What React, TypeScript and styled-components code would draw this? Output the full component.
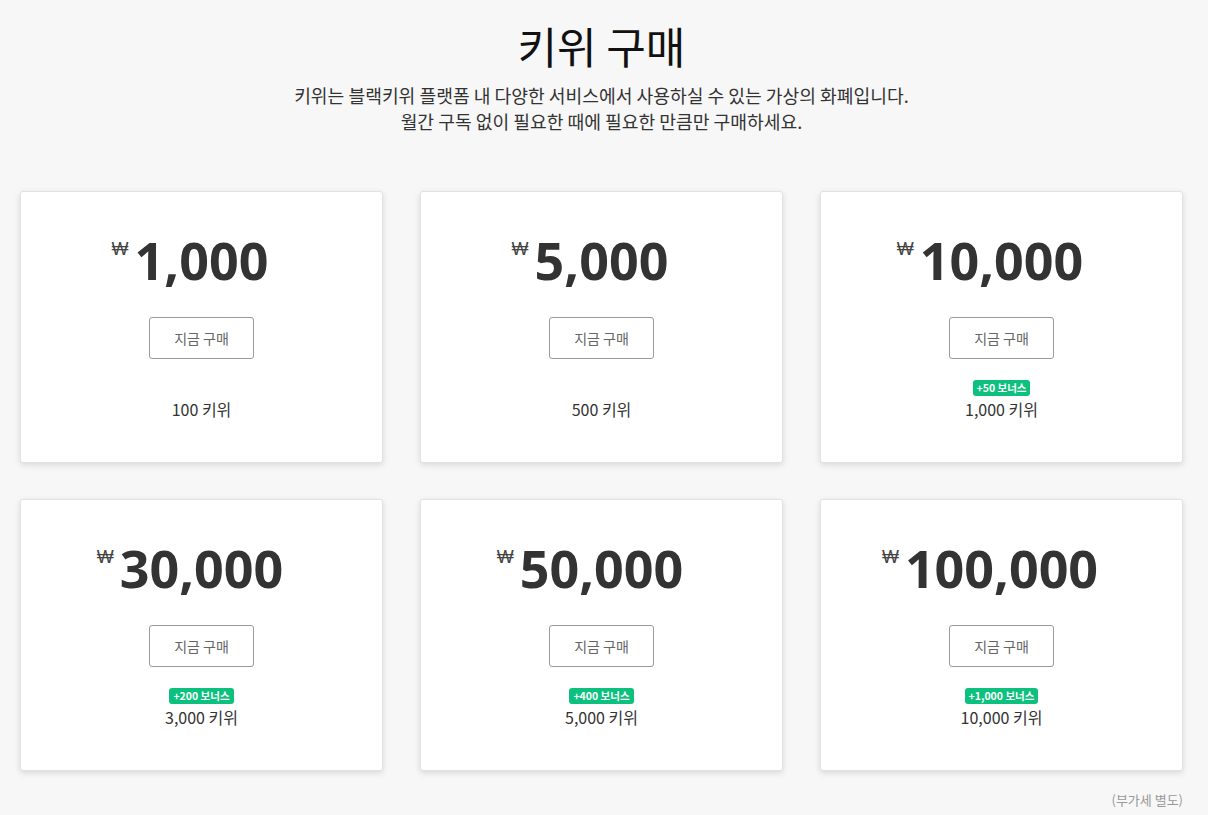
import styled, { createGlobalStyle } from 'styled-components'

const GlobalStyle = createGlobalStyle`
  html, body {
    margin: 0;
    padding: 0;
    background: #f7f7f7;
    font-family: 'Noto Sans', 'Noto Sans CJK KR', sans-serif;
    color: #333;
  }
`

const Page = styled.div`
  padding: 14px 25px 0 20px;
`

const Head = styled.header`
  text-align: center;
`

const Title = styled.h1`
  margin: 0;
  font-family: 'Noto Sans CJK KR', sans-serif;
  font-size: 43px;
  font-weight: 400;
  line-height: 62px;
  color: #111;
`

const Lead = styled.p`
  margin: 6px 0 0;
  font-family: 'Noto Sans CJK KR', sans-serif;
  font-size: 18.2px;
  line-height: 26px;
  color: #333;
`

const Grid = styled.section`
  display: grid;
  grid-template-columns: repeat(3, 1fr);
  column-gap: 37px;
  row-gap: 36px;
  margin-top: 57px;
`

const Card = styled.div`
  background: #fff;
  border: 1px solid #e2e2e2;
  border-radius: 3px;
  box-shadow: 0 2px 6px rgba(0, 0, 0, 0.13);
  height: 272px;
  display: flex;
  flex-direction: column;
  align-items: center;
  padding-top: 30px;
  box-sizing: border-box;
`

const Price = styled.div`
  position: relative;
  font-family: 'Open Sans', 'Noto Sans', sans-serif;
  font-weight: 700;
  font-size: 52px;
  line-height: 76px;
  color: #333;
`

const Won = styled.span`
  position: absolute;
  right: 100%;
  top: 16px;
  margin-right: 6px;
  font-family: 'Liberation Sans', 'DejaVu Sans', sans-serif;
  font-size: 18px;
  font-weight: 400;
  line-height: 22px;
  color: #444;
`

const Buy = styled.button`
  margin-top: 19px;
  width: 105px;
  height: 42px;
  background: #fff;
  border: 1px solid #9a9a9a;
  border-radius: 3px;
  font-family: 'Noto Sans CJK KR', sans-serif;
  font-size: 14px;
  color: #666;
  cursor: pointer;
`

const BonusSlot = styled.div`
  height: 18px;
  margin-top: 20px;
  display: flex;
  align-items: center;
`

const Bonus = styled.span`
  background: #0cc17e;
  color: #fff;
  font-family: 'Noto Sans CJK KR', sans-serif;
  font-size: 10.5px;
  font-weight: 700;
  line-height: 16px;
  padding: 0 4px;
  border-radius: 3px;
`

const Amount = styled.div`
  font-family: 'Noto Sans CJK KR', sans-serif;
  font-size: 16px;
  line-height: 24px;
  color: #333;
`

const Note = styled.p`
  margin: 19px 0 0;
  text-align: right;
  font-family: 'Noto Sans CJK KR', sans-serif;
  font-size: 13px;
  color: #999;
`

const plans = [
  { price: '1,000', kiwi: '100 키위' },
  { price: '5,000', kiwi: '500 키위' },
  { price: '10,000', kiwi: '1,000 키위', bonus: '+50 보너스' },
  { price: '30,000', kiwi: '3,000 키위', bonus: '+200 보너스' },
  { price: '50,000', kiwi: '5,000 키위', bonus: '+400 보너스' },
  { price: '100,000', kiwi: '10,000 키위', bonus: '+1,000 보너스' },
]

export default function App() {
  return (
    <Page>
      <GlobalStyle />
      <Head>
        <Title>키위 구매</Title>
        <Lead>
          키위는 블랙키위 플랫폼 내 다양한 서비스에서 사용하실 수 있는 가상의 화폐입니다.
          <br />
          월간 구독 없이 필요한 때에 필요한 만큼만 구매하세요.
        </Lead>
      </Head>
      <Grid>
        {plans.map((p) => (
          <Card key={p.price}>
            <Price>
              <Won>₩</Won>
              {p.price}
            </Price>
            <Buy>지금 구매</Buy>
            <BonusSlot>{p.bonus && <Bonus>{p.bonus}</Bonus>}</BonusSlot>
            <Amount>{p.kiwi}</Amount>
          </Card>
        ))}
      </Grid>
      <Note>(부가세 별도)</Note>
    </Page>
  )
}
